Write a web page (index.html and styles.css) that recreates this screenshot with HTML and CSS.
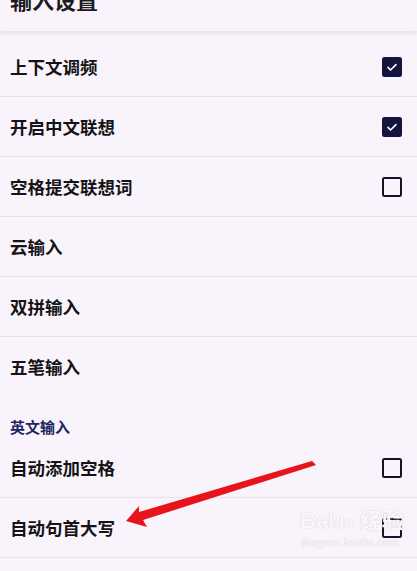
FILE: index.html
```html
<!DOCTYPE html>
<html lang="zh-CN">
<head>
    <meta charset="UTF-8">
    <meta name="viewport" content="width=device-width, initial-scale=1.0">
    <title>输入设置</title>
    <link rel="stylesheet" href="styles.css">
</head>
<body>
    <div class="page">
        <!-- Header -->
        <div class="header">
            <h1>输入设置</h1>
        </div>

        <!-- Settings list -->
        <div class="list">
            <div class="row">
                <span class="label">上下文调频</span>
                <span class="check checked">
                    <svg viewBox="0 0 20 20" width="20" height="20"><path d="M5 10.5l3.2 3.2L15 7" fill="none" stroke="#fff" stroke-width="2" stroke-linecap="round" stroke-linejoin="round"/></svg>
                </span>
            </div>
            <div class="row">
                <span class="label">开启中文联想</span>
                <span class="check checked">
                    <svg viewBox="0 0 20 20" width="20" height="20"><path d="M5 10.5l3.2 3.2L15 7" fill="none" stroke="#fff" stroke-width="2" stroke-linecap="round" stroke-linejoin="round"/></svg>
                </span>
            </div>
            <div class="row">
                <span class="label">空格提交联想词</span>
                <span class="check"></span>
            </div>
            <div class="row">
                <span class="label">云输入</span>
            </div>
            <div class="row">
                <span class="label">双拼输入</span>
            </div>
            <div class="row no-line">
                <span class="label">五笔输入</span>
            </div>

            <!-- Section: English -->
            <div class="section">英文输入</div>
            <div class="row">
                <span class="label">自动添加空格</span>
                <span class="check"></span>
            </div>
            <div class="row">
                <span class="label">自动句首大写</span>
                <span class="check"></span>
            </div>
        </div>

        <!-- Red arrow drawn over the list -->
        <svg class="arrow" width="417" height="571" viewBox="0 0 417 571">
            <path d="M312 461 L316 465 L143 520 L147 527 L126 521 L139 506 L139 512 Z" fill="#e8141b"/>
        </svg>

        <!-- Watermark -->
        <div class="watermark">
            <div class="wm-logo">Bai<span class="wm-du">du</span> 经验</div>
            <div class="wm-url">jingyan.baidu.com</div>
        </div>
    </div>
</body>
</html>
```

FILE: styles.css
```css
body {
    margin: 0;
    padding: 0;
    background-color: #f9f3fb;
    font-family: "Noto Sans CJK SC", "Noto Sans", sans-serif;
    color: #1c1b1f;
}

.page {
    position: relative;
    width: 417px;
    height: 571px;
    overflow: hidden;
}

.header {
    height: 31px;
    display: flex;
    align-items: flex-end;
    padding: 0 10px 0 10px;
    background-color: #f9f3fb;
    box-shadow: 0 3px 4px rgba(0, 0, 0, 0.07);
    position: relative;
    z-index: 1;
    overflow: hidden;
}

h1 {
    margin: 0 0 21px 0;
    font-size: 22px;
    line-height: 22px;
    font-weight: bold;
    color: #1c1b1f;
}

.list {
    padding-top: 6px;
}

.row {
    height: 60px;
    box-sizing: border-box;
    display: flex;
    align-items: center;
    justify-content: space-between;
    padding: 0 15px 0 10px;
    border-bottom: 1px solid #e7e1ea;
}

.row.no-line {
    border-bottom: none;
}

.label {
    font-size: 17.5px;
    line-height: 20px;
    font-weight: 600;
    color: #141316;
}

.check {
    width: 16px;
    height: 16px;
    border: 2.5px solid #141327;
    border-radius: 2.5px;
    display: flex;
    align-items: center;
    justify-content: center;
}

.check.checked {
    background-color: #15143f;
    border-color: #15143f;
}

.section {
    height: 41px;
    box-sizing: border-box;
    padding: 22px 10px 3px 10px;
    font-size: 15px;
    line-height: 16px;
    font-weight: bold;
    color: #1c2463;
}

.arrow {
    position: absolute;
    left: 0;
    top: 0;
    pointer-events: none;
}

.watermark {
    position: absolute;
    left: 300px;
    top: 509px;
    color: #faf7fb;
    text-shadow: 0 0 1px #d6d1d8, 0 0 1px #d6d1d8;
    font-family: "Liberation Sans", "Noto Sans CJK SC", sans-serif;
}

.wm-logo {
    font-size: 22px;
    line-height: 24px;
    font-weight: bold;
}

.wm-du {
    font-size: 16px;
}

.wm-url {
    font-size: 11px;
    line-height: 14px;
    margin-left: 2px;
    letter-spacing: 0.5px;
}
```
